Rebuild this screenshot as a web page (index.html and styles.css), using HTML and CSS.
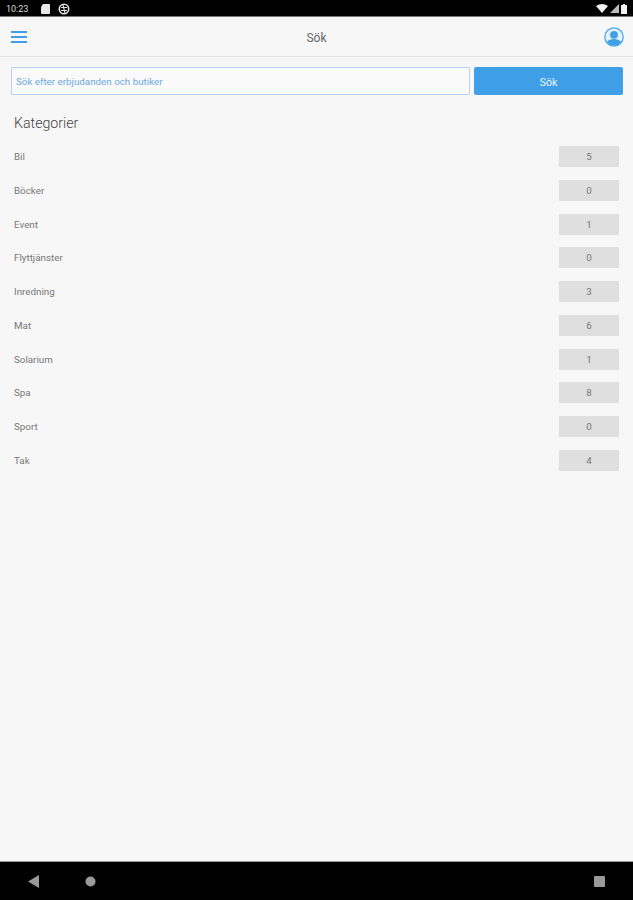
FILE: index.html
```html
<!DOCTYPE html>
<html lang="sv">
<head>
    <meta charset="UTF-8">
    <title>Sök</title>
    <link rel="stylesheet" href="styles.css">
</head>
<body>
    <div class="app">
        <div class="statusbar">
            <div class="status-left">
                <span class="clock">10:23</span>
                <svg width="9" height="10" viewBox="0 0 9 10"><path d="M2 0h6a1 1 0 0 1 1 1v8a1 1 0 0 1-1 1H1a1 1 0 0 1-1-1V3z" fill="#e8e8e8"/></svg>
                <svg width="12" height="12" viewBox="0 0 12 12"><circle cx="6" cy="6" r="4.7" fill="none" stroke="#e0e0e0" stroke-width="1.6"/><path d="M3 4.5h6M3 7.5h6M5 2l2 8" stroke="#e0e0e0" stroke-width="1.1"/></svg>
            </div>
            <div class="status-right">
                <svg width="12" height="9" viewBox="0 0 12 9"><path d="M0 2Q6-2 12 2L6 9z" fill="#f2f2f2"/></svg>
                <svg width="9" height="9" viewBox="0 0 9 9"><path d="M9 0v9H0z" fill="#bdbdbd"/></svg>
                <svg width="6" height="10" viewBox="0 0 6 10"><path d="M2 0h2v1h2v9H0V1h2z" fill="#f2f2f2"/></svg>
            </div>
        </div>

        <header class="topbar">
            <svg class="menu-icon" width="16" height="12" viewBox="0 0 16 12"><path d="M0 1h16M0 6h16M0 11h16" stroke="#3f9fe6" stroke-width="2"/></svg>
            <span class="title">Sök</span>
            <svg class="user-icon" width="20" height="20" viewBox="0 0 20 20">
                <circle cx="10" cy="10" r="9.2" fill="#e4f1fb" stroke="#4fa7e8" stroke-width="1.3"/>
                <circle cx="10" cy="7.8" r="3.9" fill="#3f9fe6"/>
                <path d="M2.9 15Q5 12 10 12T17.1 15A8.8 8.8 0 0 1 2.9 15z" fill="#3f9fe6"/>
            </svg>
        </header>

        <main class="content">
            <form class="search">
                <input class="search-input" type="text" placeholder="Sök efter erbjudanden och butiker">
                <button class="search-btn" type="button">Sök</button>
            </form>

            <h2 class="heading">Kategorier</h2>

            <ul class="categories">
                <li><span>Bil</span><b class="count">5</b></li>
                <li><span>Böcker</span><b class="count">0</b></li>
                <li><span>Event</span><b class="count">1</b></li>
                <li><span>Flyttjänster</span><b class="count">0</b></li>
                <li><span>Inredning</span><b class="count">3</b></li>
                <li><span>Mat</span><b class="count">6</b></li>
                <li><span>Solarium</span><b class="count">1</b></li>
                <li><span>Spa</span><b class="count">8</b></li>
                <li><span>Sport</span><b class="count">0</b></li>
                <li><span>Tak</span><b class="count">4</b></li>
            </ul>
        </main>

        <div class="navbar">
            <svg width="11" height="13" viewBox="0 0 11 13"><path d="M11 0v13L0 6.5z" fill="#9a9a9a"/></svg>
            <svg class="nav-home" width="11" height="11" viewBox="0 0 11 11"><circle cx="5.5" cy="5.5" r="5" fill="#9a9a9a"/></svg>
            <svg class="nav-recent" width="11" height="11" viewBox="0 0 11 11"><rect width="11" height="11" rx="1" fill="#9a9a9a"/></svg>
        </div>
    </div>
</body>
</html>
```

FILE: styles.css
```css
html, body {
    margin: 0;
    padding: 0;
}
body {
    font-family: Roboto, "Liberation Sans", sans-serif;
    background-color: #f7f7f7;
    color: #555;
}
.app {
    display: flex;
    flex-direction: column;
    height: 900px;
}
.statusbar {
    box-sizing: border-box;
    height: 17px;
    background-color: #000;
    border-bottom: 1px solid #777;
    display: flex;
    align-items: center;
    justify-content: space-between;
    padding: 1px 6px 0;
    color: #ddd;
    flex: none;
}
.status-left, .status-right {
    display: flex;
    align-items: center;
}
.status-left {
    gap: 8px;
}
.status-right {
    gap: 2px;
}
.clock {
    font-size: 9px;
    width: 27px;
}
.topbar {
    box-sizing: border-box;
    height: 40px;
    border-bottom: 1px solid #e2e2e2;
    display: flex;
    align-items: center;
    justify-content: space-between;
    padding: 0 9px 0 11px;
    position: relative;
    flex: none;
}
.title {
    font-size: 12px;
    color: #666;
    position: absolute;
    left: 0;
    right: 0;
    padding-top: 2px;
    text-align: center;
}
.menu-icon, .user-icon {
    position: relative;
}
.content {
    flex: 1;
    padding: 10px 10px 0 11px;
}
.search {
    display: flex;
    gap: 4px;
    height: 28px;
}
.search-input {
    flex: 1;
    min-width: 0;
    box-sizing: border-box;
    border: 1px solid #b5d3ef;
    border-radius: 1px;
    background-color: #fafafa;
    padding: 0 4px;
    font-family: inherit;
    font-size: 9.8px;
    outline: none;
}
.search-input::placeholder {
    color: #6aa9e0;
    opacity: 1;
}
.search-btn {
    width: 149px;
    border: none;
    border-radius: 2px;
    background-color: #3f9fe6;
    color: #eef6fd;
    font-family: inherit;
    font-size: 10.5px;
    padding: 3px 0 0;
}
.heading {
    margin: 20px 0 14px 3px;
    font-size: 14.2px;
    font-weight: 300;
    line-height: 17px;
    color: #444;
}
.categories {
    list-style: none;
    margin: 0;
    padding: 0 4px 0 3px;
}
.categories li {
    display: flex;
    align-items: center;
    justify-content: space-between;
    height: 21px;
    margin-bottom: 12.78px;
    font-size: 9.8px;
    color: #777;
}
.count {
    width: 60px;
    height: 21px;
    line-height: 21px;
    background-color: #dfdfdf;
    border-radius: 1px;
    text-align: center;
    font-weight: 400;
    color: #777;
}
.navbar {
    height: 38px;
    background-color: #000;
    border-top: 1px solid #999;
    display: flex;
    align-items: center;
    padding: 0 28px;
    flex: none;
}
.nav-home {
    margin-left: 46px;
}
.nav-recent {
    margin-left: auto;
}
```
